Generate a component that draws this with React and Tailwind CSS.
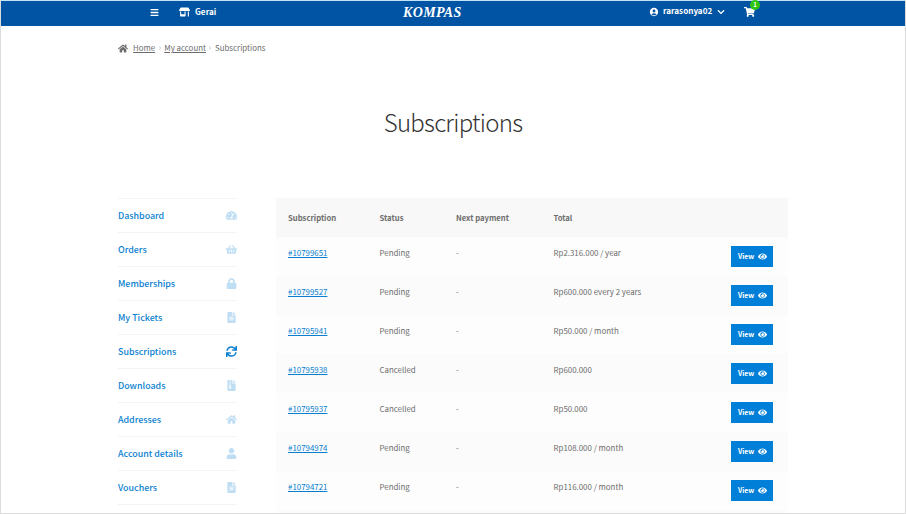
import React from "react";
import {
  FaBars, FaHome, FaTachometerAlt, FaShoppingBasket, FaLock, FaFileAlt, FaSync,
  FaFileArchive, FaUser, FaEye, FaShoppingCart, FaChevronDown, FaChevronRight, FaStoreAlt,
} from "react-icons/fa";
import { MdAccountCircle } from "react-icons/md";

const NAV = [
  ["Dashboard", FaTachometerAlt],
  ["Orders", FaShoppingBasket],
  ["Memberships", FaLock],
  ["My Tickets", FaFileAlt],
  ["Subscriptions", FaSync],
  ["Downloads", FaFileArchive],
  ["Addresses", FaHome],
  ["Account details", FaUser],
  ["Vouchers", FaFileAlt],
];

const ROWS = [
  ["#10799651", "Pending", "Rp2.316.000 / year"],
  ["#10799527", "Pending", "Rp600.000 every 2 years"],
  ["#10795941", "Pending", "Rp50.000 / month"],
  ["#10795938", "Cancelled", "Rp600.000"],
  ["#10795937", "Cancelled", "Rp50.000"],
  ["#10794974", "Pending", "Rp108.000 / month"],
  ["#10794721", "Pending", "Rp116.000 / month"],
];

const COLS = "grid grid-cols-[91.5px_76.5px_97.5px_177.5px_42px] pl-[12px]";

function TopBar() {
  return (
    <header className="flex h-[26px] shrink-0 items-start bg-[#0054a3] border-t border-[#c3e3f6] pl-[149px] text-white">
      <FaBars className="mt-[7px] h-[9px] w-[9px]" />
      <FaStoreAlt className="ml-[20px] mt-[6px] h-[10px] w-[11px]" />
      <div className="ml-[5px] mt-[2px] w-[208px] text-[8.2px] leading-[16px] font-bold">Gerai</div>
      <div className="mt-[3px] w-[246px] whitespace-nowrap font-['Liberation_Serif',serif] text-[14px] leading-[17px] font-bold italic tracking-[0.35px]">
        KOMPAS
      </div>
      <MdAccountCircle className="mt-[6px] h-[10px] w-[10px]" />
      <div className="ml-[4px] mt-[2px] w-[54px] whitespace-nowrap text-[8.1px] leading-[16px] font-bold">rarasonya02</div>
      <FaChevronDown className="mt-[7px] h-[8px] w-[8px]" />
      <div className="relative ml-[19px] mt-[6px]">
        <FaShoppingCart className="h-[10px] w-[11px]" />
        <span className="absolute -top-[7px] left-[6px] h-[10px] w-[10px] rounded-full bg-[#2fc40d] text-center text-[6px] leading-[10px] font-bold">
          1
        </span>
      </div>
    </header>
  );
}

function Breadcrumb() {
  return (
    <nav className="flex h-[14px] items-center whitespace-nowrap text-[7.9px] leading-[14px] text-[#6d6d6d]">
      <FaHome className="mr-[5px] h-[9px] w-[10px]" />
      <a className="underline">Home</a>
      <FaChevronRight className="mx-[2.5px] h-[4px] w-[4px] text-[#c9c9c9]" />
      <a className="underline">My account</a>
      <FaChevronRight className="mx-[2.5px] h-[4px] w-[4px] text-[#c9c9c9]" />
      <span>Subscriptions</span>
    </nav>
  );
}

function Sidebar() {
  return (
    <ul className="w-[119px] border-t border-[#f3f3f3]">
      {NAV.map(([label, Icon]) => (
        <li key={label} className="flex h-[34px] items-center justify-between border-b border-[#f3f3f3] pb-[1px] text-[8.9px] font-medium text-[#0a7fd0]">
          <span className="leading-[15px]">{label}</span>
          <Icon className={label === "Subscriptions" ? "h-[11px] w-[11px]" : "h-[11px] w-[11px] opacity-25"} />
        </li>
      ))}
    </ul>
  );
}

function SubscriptionTable() {
  return (
    <section className="w-[512px] text-[7.9px] text-[#6d6d6d]">
      <div className={COLS + " h-[39px] items-center bg-[#f8f8f8] text-[7.7px] font-bold"}>
        <span>Subscription</span>
        <span>Status</span>
        <span>Next payment</span>
        <span>Total</span>
      </div>
      {ROWS.map(([id, status, total], i) => (
        <div key={id} className={COLS + " h-[39px] items-start pt-[9px] leading-[13px] " + (i % 2 ? "bg-[#fbfbfb]" : "bg-[#fdfdfd]")}>
          <a className="text-[#0a7fd0] underline">{id}</a>
          <span>{status}</span>
          <span>-</span>
          <span>{total}</span>
          <button className="flex h-[21px] w-[42px] items-center bg-[#007fd8] pl-[7px] text-[6.9px] font-bold text-white">
            View
            <FaEye className="ml-[3.5px] h-[9px] w-[9px]" />
          </button>
        </div>
      ))}
      <div className="h-[39px] bg-[#fbfbfb]" />
    </section>
  );
}

export default function App() {
  return (
    <div className="flex h-[514px] w-[906px] flex-col overflow-hidden border-x border-b border-[#dcdcdc] bg-white font-['Noto_Sans_CJK_SC',sans-serif]">
      <TopBar />
      <main className="min-h-0 flex-1 overflow-hidden pl-[117px] pt-[15px]">
        <Breadcrumb />
        <h1 className="mt-[47px] h-[40px] w-[670px] text-center text-[24px] leading-[40px] font-light tracking-[-0.75px] text-[#333]">
          Subscriptions
        </h1>
        <div className="mt-[56px] flex gap-[39px]">
          <Sidebar />
          <SubscriptionTable />
        </div>
      </main>
    </div>
  );
}
